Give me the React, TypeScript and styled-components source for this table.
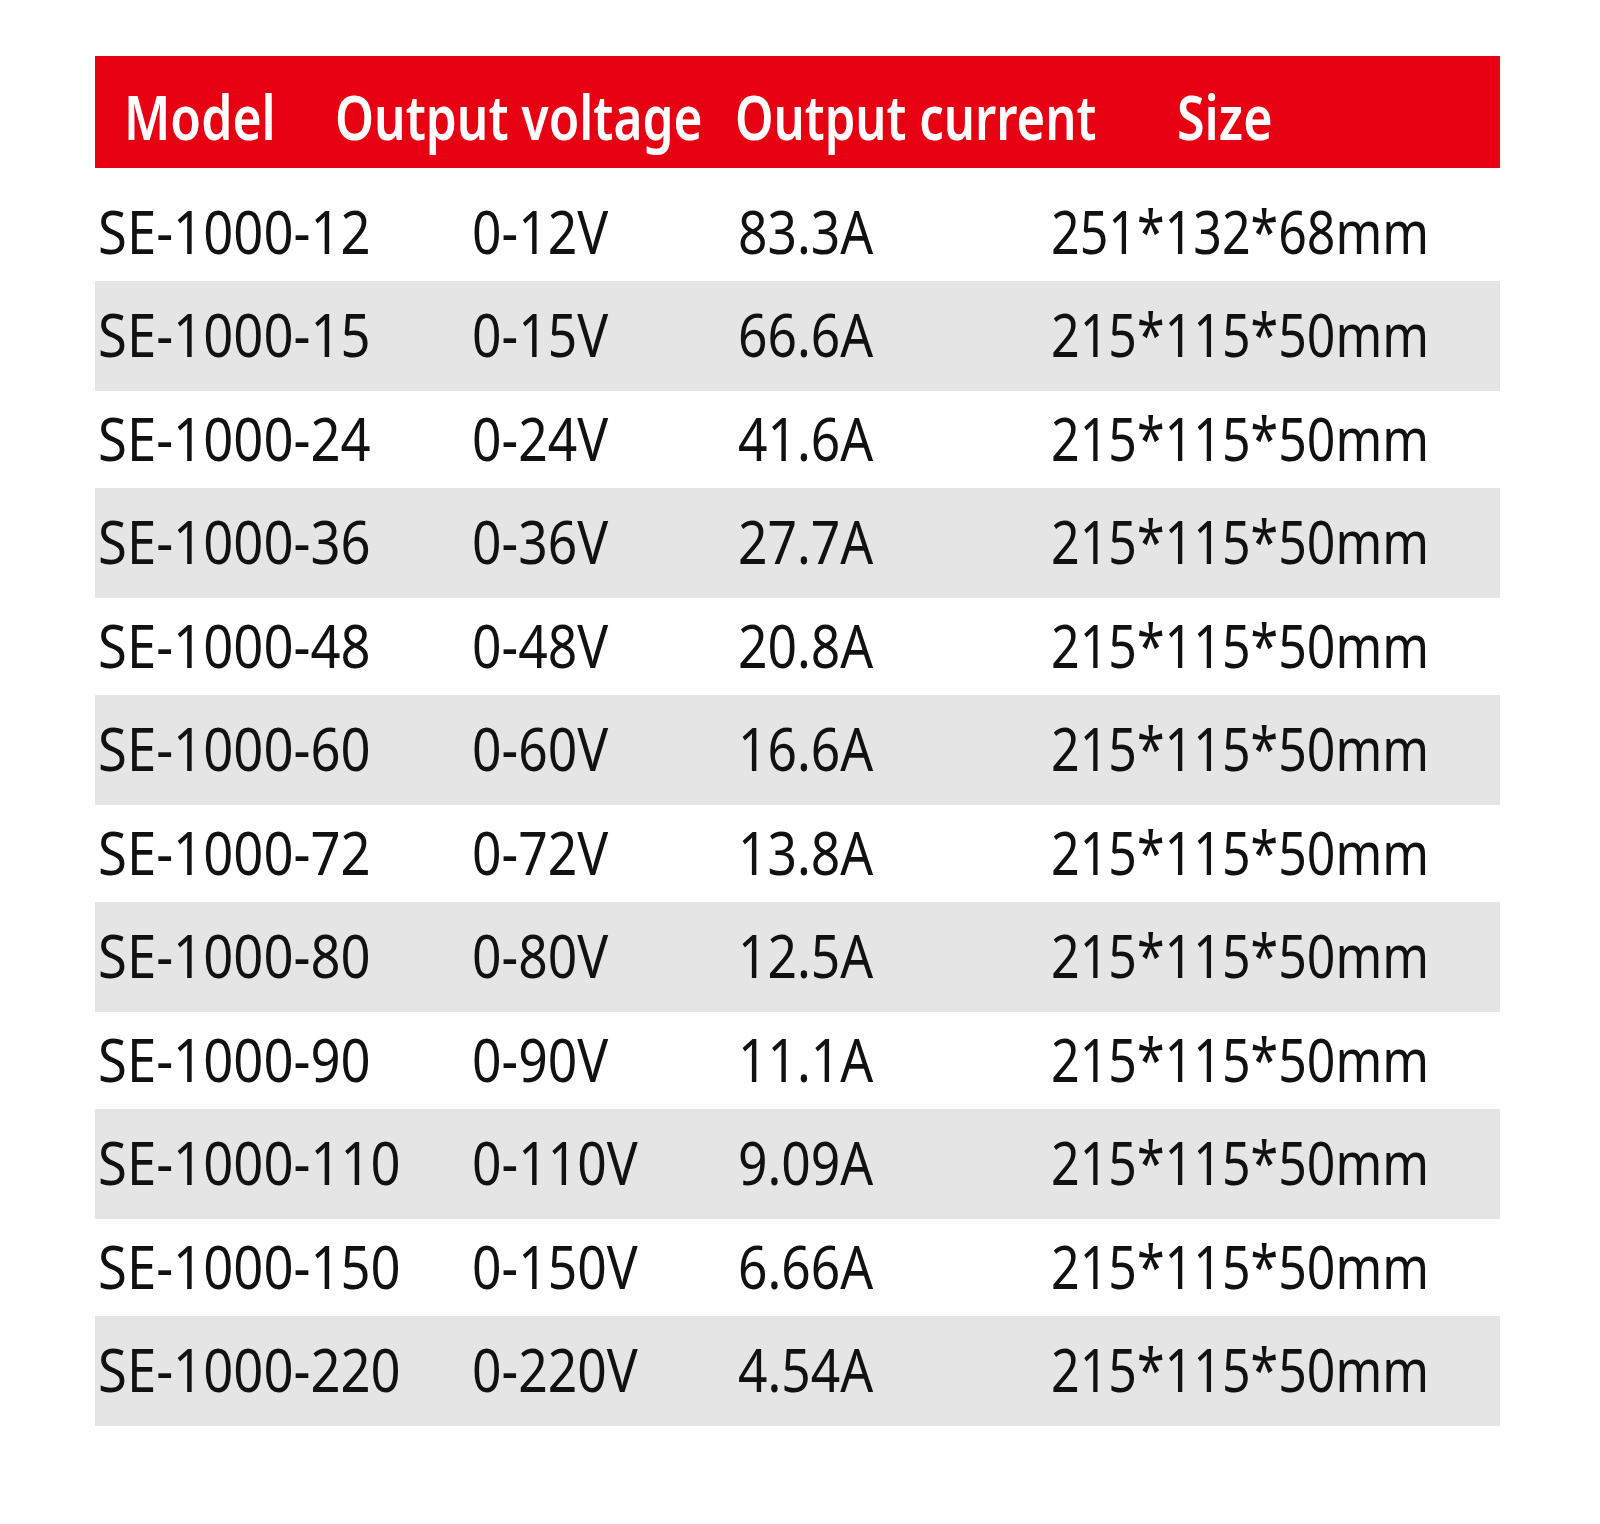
import React from 'react'
import styled, { createGlobalStyle } from 'styled-components'

const GlobalStyle = createGlobalStyle`
  html, body {
    margin: 0;
    padding: 0;
    background: #ffffff;
  }
  body {
    font-family: "Noto Sans", "Open Sans", "Liberation Sans", sans-serif;
  }
`

interface Spec {
  model: string
  voltage: string
  current: string
  size: string
}

const specs: Spec[] = [
  { model: 'SE-1000-12', voltage: '0-12V', current: '83.3A', size: '251*132*68mm' },
  { model: 'SE-1000-15', voltage: '0-15V', current: '66.6A', size: '215*115*50mm' },
  { model: 'SE-1000-24', voltage: '0-24V', current: '41.6A', size: '215*115*50mm' },
  { model: 'SE-1000-36', voltage: '0-36V', current: '27.7A', size: '215*115*50mm' },
  { model: 'SE-1000-48', voltage: '0-48V', current: '20.8A', size: '215*115*50mm' },
  { model: 'SE-1000-60', voltage: '0-60V', current: '16.6A', size: '215*115*50mm' },
  { model: 'SE-1000-72', voltage: '0-72V', current: '13.8A', size: '215*115*50mm' },
  { model: 'SE-1000-80', voltage: '0-80V', current: '12.5A', size: '215*115*50mm' },
  { model: 'SE-1000-90', voltage: '0-90V', current: '11.1A', size: '215*115*50mm' },
  { model: 'SE-1000-110', voltage: '0-110V', current: '9.09A', size: '215*115*50mm' },
  { model: 'SE-1000-150', voltage: '0-150V', current: '6.66A', size: '215*115*50mm' },
  { model: 'SE-1000-220', voltage: '0-220V', current: '4.54A', size: '215*115*50mm' },
]

const Page = styled.div`
  min-height: 1524px;
  padding: 56px 0 0 95px;
  box-sizing: border-box;
`

const Table = styled.div`
  width: 1405px;
  display: flex;
  flex-direction: column;
`

const HeaderBar = styled.div`
  height: 112px;
  background: #e60012;
  display: grid;
  grid-template-columns: 211px 400px 442px 1fr;
  align-items: center;
  padding-left: 29px;
  margin-bottom: 16px;
`

const HeaderCell = styled.div`
  color: #ffffff;
  font-size: 62px;
  font-weight: 600;
  line-height: 1;
  white-space: nowrap;
  padding-top: 8px;
`

const Row = styled.div<{ $shaded: boolean }>`
  height: ${({ $shaded }) => ($shaded ? '110px' : '97px')};
  background: ${({ $shaded }) => ($shaded ? '#e5e5e5' : '#ffffff')};
  display: grid;
  grid-template-columns: 374px 266px 313px 1fr;
  align-items: center;
  padding-left: 3px;
`

const Cell = styled.div`
  color: #111111;
  font-size: 60px;
  font-weight: 400;
  line-height: 1;
  white-space: nowrap;
  padding-bottom: 4px;
`

// the source artwork uses a narrow face, so the glyphs are squeezed horizontally
const Narrow = styled.span<{ $ratio: number }>`
  display: inline-block;
  transform: scaleX(${({ $ratio }) => $ratio});
  transform-origin: left center;
`

const HEAD = 0.8

const App = () => {
  return (
    <Page>
      <GlobalStyle />
      <Table>
        <HeaderBar>
          <HeaderCell><Narrow $ratio={0.805}>Model</Narrow></HeaderCell>
          <HeaderCell><Narrow $ratio={HEAD}>Output voltage</Narrow></HeaderCell>
          <HeaderCell><Narrow $ratio={0.79}>Output current</Narrow></HeaderCell>
          <HeaderCell><Narrow $ratio={0.81}>Size</Narrow></HeaderCell>
        </HeaderBar>
        {specs.map((s, i) => (
          <Row key={s.model} $shaded={i % 2 === 1}>
            <Cell><Narrow $ratio={0.877}>{s.model}</Narrow></Cell>
            <Cell><Narrow $ratio={0.86}>{s.voltage}</Narrow></Cell>
            <Cell><Narrow $ratio={0.86}>{s.current}</Narrow></Cell>
            <Cell><Narrow $ratio={0.835}>{s.size}</Narrow></Cell>
          </Row>
        ))}
      </Table>
    </Page>
  )
}

export default App
